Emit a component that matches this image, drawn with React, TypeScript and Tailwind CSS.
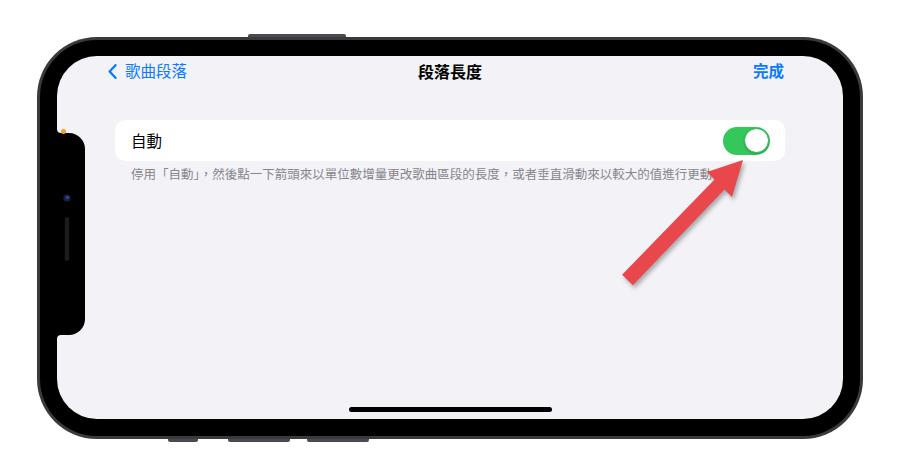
import React from "react";

const font = {
  fontFamily: '"Noto Sans CJK TC", "Noto Sans CJK SC", "Noto Sans", sans-serif',
};

function Arrow() {
  return (
    <svg
      className="absolute left-0 top-0 pointer-events-none"
      width="900"
      height="476"
      viewBox="0 0 900 476"
      style={{ filter: "drop-shadow(2px 3px 2px rgba(0,0,0,0.3))" }}
    >
      <polygon
        points="743,160 732,197 724.5,189.5 632.9,285.2 622.1,274.8 714.5,179.5 707,172"
        fill="#e8474c"
      />
    </svg>
  );
}

function Notch() {
  return (
    <div className="absolute left-0 top-[73px]">
      <svg width="30" height="212" viewBox="0 0 30 212">
        <path
          d="M0,0 A4,4 0 0 0 4,4 L12,4 A16,16 0 0 1 28,20 L28,190 A16,16 0 0 1 12,206 L4,206 A4,4 0 0 0 0,210 Z"
          fill="#000"
        />
        <circle cx="10" cy="69" r="3.6" fill="#1a2140" />
        <circle cx="10.5" cy="68.5" r="1.4" fill="#3a4ea0" />
        <rect x="7.8" y="88" width="4.4" height="44" rx="2.2" fill="#1c1c1e" />
      </svg>
    </div>
  );
}

export default function App() {
  return (
    <div className="relative w-[900px] h-[476px] bg-white overflow-hidden" style={font}>
      <div className="pt-[37px] pl-[37px]">
        <div className="relative w-[826px] h-[402px] rounded-[60px] bg-[#3a3a3e] p-[3px]">
          {/* side buttons */}
          <div className="absolute left-[211px] top-[-3px] w-[98px] h-[3px] rounded-t-[2px] bg-[#4a4a4f]" />
          <div className="absolute left-[131px] bottom-[-3px] w-[30px] h-[3px] rounded-b-[2px] bg-[#4a4a4f]" />
          <div className="absolute left-[191px] bottom-[-3px] w-[62px] h-[3px] rounded-b-[2px] bg-[#4a4a4f]" />
          <div className="absolute left-[270px] bottom-[-3px] w-[62px] h-[3px] rounded-b-[2px] bg-[#4a4a4f]" />
          <div className="w-full h-full rounded-[57px] bg-black px-[17px] pt-[16px] pb-[17px]">
            <div className="relative w-full h-full rounded-[40px] bg-[#f2f2f7] overflow-hidden flex flex-col">
              {/* nav */}
              <div className="relative h-[28px] mt-[1px] flex items-center">
                <div className="absolute left-[51px] top-0 h-full flex items-center text-[#0a7aff]">
                  <svg width="9" height="15" viewBox="0 0 9 15" className="mr-[8px]">
                    <path
                      d="M7.5 1.2 L1.6 7.5 L7.5 13.8"
                      fill="none"
                      stroke="#0a7aff"
                      strokeWidth="2.3"
                      strokeLinecap="round"
                      strokeLinejoin="round"
                    />
                  </svg>
                  <span className="text-[15.5px] leading-none">歌曲段落</span>
                </div>
                <div className="w-full text-center text-[16px] font-bold text-black leading-none">
                  段落長度
                </div>
                <div className="absolute right-[59px] top-0 h-full flex items-center text-[15.5px] font-bold text-[#0a7aff] leading-none">
                  完成
                </div>
              </div>

              {/* card */}
              <div className="mx-[58px] mt-[35px] h-[41px] rounded-[10px] bg-white flex items-center justify-between pl-[16px] pr-[15px]">
                <span className="text-[15.5px] text-black leading-none">自動</span>
                <div className="w-[47px] h-[28px] rounded-full bg-[#34c759] flex items-center justify-end pr-[1.5px]">
                  <div className="w-[25px] h-[25px] rounded-full bg-white border border-[#2fb350] shadow-[0_1px_2px_rgba(0,0,0,0.2)]" />
                </div>
              </div>

              {/* footer */}
              <div className="mx-[58px] pl-[16px] mt-[5px] text-[12.5px] leading-[16px] text-[#86868b] whitespace-nowrap">
                停用「自動」，然後點一下箭頭來以單位數增量更改歌曲區段的長度，或者垂直滑動來以較大的值進行更動
              </div>

              <div className="flex-1" />
              {/* home indicator */}
              <div className="flex justify-center pb-[7px]">
                <div className="w-[203px] h-[5px] rounded-full bg-black" />
              </div>

              <Notch />
              <div className="absolute left-[4px] top-[73px] w-[5px] h-[5px] rounded-full bg-[#f2a12d]" />
            </div>
          </div>
        </div>
      </div>
      <Arrow />
    </div>
  );
}
